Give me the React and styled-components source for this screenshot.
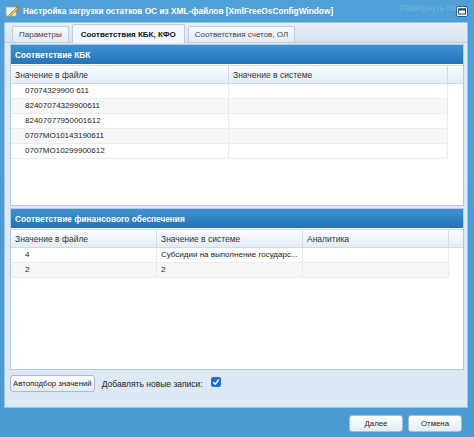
import React from "react";
import styled, { createGlobalStyle } from "styled-components";

const GlobalStyle = createGlobalStyle`
  html, body {
    margin: 0;
    padding: 0;
    background: #4d9dd5;
  }
  * {
    box-sizing: border-box;
  }
`;

const Window = styled.div`
  width: 474px;
  height: 437px;
  display: flex;
  flex-direction: column;
  background: linear-gradient(#4fa0d8, #4b9bd3);
  font-family: "Liberation Sans", Arial, sans-serif;
  font-size: 8.5px;
  color: #222;
  overflow: hidden;
`;

const TitleBar = styled.div`
  position: relative;
  height: 22px;
  flex: none;
  display: flex;
  align-items: center;
  gap: 4px;
  padding: 0 6px 0 5px;
  color: #fff;
  font-weight: bold;
  font-size: 8.3px;
  white-space: nowrap;
`;

const TitleText = styled.span`
  flex: 1;
  overflow: hidden;
`;

const GhostHint = styled.span`
  position: absolute;
  top: 3px;
  left: 400px;
  color: rgba(255, 255, 255, 0.2);
  font-weight: normal;
`;

const Body = styled.div`
  height: 386px;
  margin: 0 6px 0 4px;
  background: #dde9f5;
  border: 1px solid #9fc3e2;
  display: flex;
  flex-direction: column;
`;

const TabStrip = styled.div`
  height: 20px;
  flex: none;
  display: flex;
  align-items: flex-end;
  gap: 3px;
  padding: 0 0 0 7px;
  background: linear-gradient(#e7eef6, #d9e4f0);
  border-bottom: 1px solid #b9cde2;
  font-size: 8px;
`;

const Tab = styled.div`
  height: ${({ active }) => (active ? "19px" : "16px")};
  padding: 0 ${({ active }) => (active ? "8px" : "6px")};
  display: flex;
  align-items: center;
  border: 1px solid #bdcde0;
  border-bottom: none;
  border-radius: 2px 2px 0 0;
  background: ${({ active }) =>
    active ? "#f4f8fc" : "linear-gradient(#f6f8fb, #e6ecf3)"};
  color: ${({ active }) => (active ? "#111" : "#444")};
  font-weight: ${({ active }) => (active ? "bold" : "normal")};
  margin-bottom: ${({ active }) => (active ? "-1px" : "0")};
`;

const TabPanel = styled.div`
  flex: 1;
  display: flex;
  flex-direction: column;
  gap: 2px;
  padding: 1px 3px 0 5px;
`;

const Section = styled.div`
  height: ${({ h }) => h}px;
  flex: none;
  display: flex;
  flex-direction: column;
  border: 1px solid #b4c9de;
  background: #fff;
`;

const SectionHeader = styled.div`
  height: 19px;
  flex: none;
  display: flex;
  align-items: center;
  padding-left: 4px;
  background: linear-gradient(#3b92d2, #2474b8);
  color: #fff;
  font-weight: bold;
  font-size: 8.3px;
`;

const GridHead = styled.div`
  height: 19px;
  flex: none;
  display: flex;
  margin-top: 1px;
  background: linear-gradient(#fbfdff, #e3edf7);
  border-top: 1px solid #d3e1ee;
  border-bottom: 1px solid #cfdbe7;
`;

const HeadCell = styled.div`
  width: ${({ w }) => w}px;
  flex: none;
  display: flex;
  align-items: center;
  padding-left: 4px;
  border-right: 1px solid #cfdce9;
  color: #333;
`;

const Row = styled.div`
  height: 15px;
  flex: none;
  display: flex;
  background: ${({ alt }) => (alt ? "#f7f7f7" : "#fff")};
  border-bottom: 1px solid #ececec;
  width: ${({ w }) => w}px;
  font-size: 8px;
`;

const Cell = styled.div`
  width: ${({ w }) => w}px;
  flex: none;
  padding-left: ${({ indent }) => (indent ? "14px" : "4px")};
  padding-right: 2px;
  line-height: 14px;
  border-right: 1px solid #eaeaea;
  white-space: nowrap;
  overflow: hidden;
  text-overflow: ellipsis;
  color: #222;
`;

const Toolbar = styled.div`
  height: 22px;
  flex: none;
  display: flex;
  align-items: center;
  gap: 7px;
  padding: 1px 0 0 0;
  font-size: 8.5px;
`;

const Button = styled.button`
  height: ${({ h }) => h || 16}px;
  width: ${({ w }) => (w ? `${w}px` : "auto")};
  padding: 0 2px;
  font-family: inherit;
  font-size: 7.8px;
  color: #222;
  border: 1px solid #a9bbcf;
  border-radius: 3px;
  background: linear-gradient(#ffffff, #e4ebf3);
  cursor: pointer;
`;

const CheckBox = styled.span`
  width: 10px;
  height: 10px;
  margin-left: 1px;
  margin-top: -4px;
  border-radius: 2px;
  background: #1e6fd9;
  display: flex;
  align-items: center;
  justify-content: center;
`;

const Footer = styled.div`
  flex: 1;
  display: flex;
  justify-content: flex-end;
  align-items: flex-start;
  gap: 5px;
  padding: 7px 12px 0 0;
`;

const kbk = [
  "07074329900 611",
  "82407074329900611",
  "82407077950001612",
  "0707MO10143190611",
  "0707MO10299900612",
];

const fin = [
  ["4", "Субсидии на выполнение государственного задания", ""],
  ["2", "2", ""],
];

const TitleIcon = () => (
  <svg width="14" height="14" viewBox="0 0 14 14">
    <rect x="1" y="3" width="10" height="9" fill="#f3f3f3" stroke="#9aa" strokeWidth="0.8" />
    <path d="M4 11 L12 3 L13.5 4.5 L5.5 12.5 L3.5 13 Z" fill="#f2b233" stroke="#b8741a" strokeWidth="0.6" />
    <path d="M12 3 L13.5 4.5" stroke="#e04d3a" strokeWidth="1.4" />
  </svg>
);

const MaxIcon = () => (
  <svg width="12" height="11" viewBox="0 0 12 11">
    <rect x="0.5" y="0.5" width="11" height="10" rx="1.5" fill="#fff" stroke="#2a5d8c" />
    <rect x="2.5" y="3" width="7" height="5" fill="#fff" stroke="#1f3f60" strokeWidth="1" />
    <rect x="2" y="2.5" width="8" height="2" fill="#1f3f60" />
  </svg>
);

const Tick = () => (
  <svg width="8" height="8" viewBox="0 0 8 8">
    <path d="M1.2 4.2 L3.2 6.2 L6.8 1.6" fill="none" stroke="#fff" strokeWidth="1.5" />
  </svg>
);

const App = () => {
  return (
    <>
      <GlobalStyle />
      <Window>
        <TitleBar>
          <TitleIcon />
          <TitleText>
            Настройка загрузки остатков ОС из XML-файлов [XmlFreeOsConfigWindow]
          </TitleText>
          <GhostHint>Развернуть окно</GhostHint>
          <MaxIcon />
        </TitleBar>
        <Body>
          <TabStrip>
            <Tab>Параметры</Tab>
            <Tab active>Соответствия КБК, КФО</Tab>
            <Tab>Соответствия счетов, ОЛ</Tab>
          </TabStrip>
          <TabPanel>
            <Section h={162}>
              <SectionHeader>Соответствие КБК</SectionHeader>
              <GridHead>
                <HeadCell w={218}>Значение в файле</HeadCell>
                <HeadCell w={219}>Значение в системе</HeadCell>
              </GridHead>
              {kbk.map((v, i) => (
                <Row key={v} alt={i % 2 === 1} w={437}>
                  <Cell w={218} indent>
                    {v}
                  </Cell>
                  <Cell w={219} />
                </Row>
              ))}
            </Section>
            <Section h={162}>
              <SectionHeader>Соответствие финансового обеспечения</SectionHeader>
              <GridHead>
                <HeadCell w={146}>Значение в файле</HeadCell>
                <HeadCell w={146}>Значение в системе</HeadCell>
                <HeadCell w={146}>Аналитика</HeadCell>
              </GridHead>
              {fin.map((r, i) => (
                <Row key={i} alt={i % 2 === 1} w={438}>
                  <Cell w={146} indent>
                    {r[0]}
                  </Cell>
                  <Cell w={146} title={r[1]}>
                    {r[1].length > 31 ? r[1].slice(0, 31) + "..." : r[1]}
                  </Cell>
                  <Cell w={146}>{r[2]}</Cell>
                </Row>
              ))}
            </Section>
            <Toolbar>
              <Button h={17}>Автоподбор значений</Button>
              <span>Добавлять новые записи:</span>
              <CheckBox>
                <Tick />
              </CheckBox>
            </Toolbar>
          </TabPanel>
        </Body>
        <Footer>
          <Button w={54} h={17}>
            Далее
          </Button>
          <Button w={54} h={17}>
            Отмена
          </Button>
        </Footer>
      </Window>
    </>
  );
};

export default App;
